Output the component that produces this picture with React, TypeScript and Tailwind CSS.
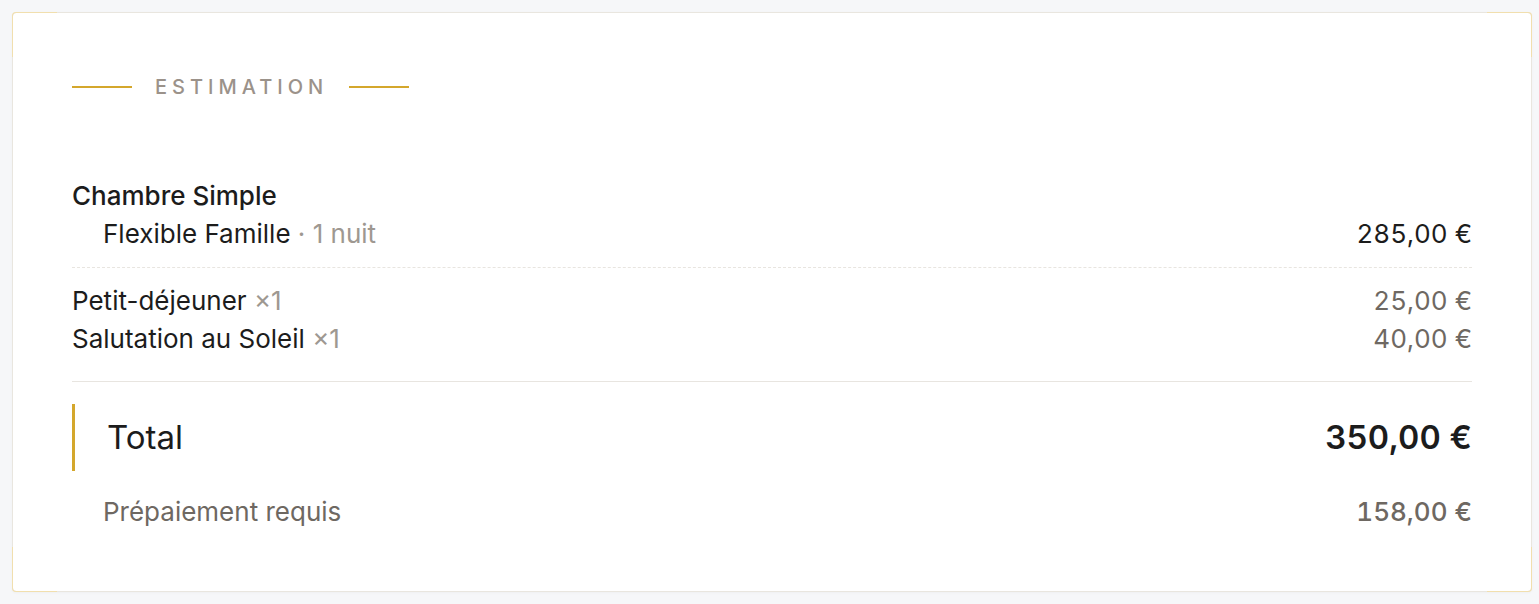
import React from "react";

const Corner = ({ pos }: { pos: string }) => (
  <div className={`pointer-events-none absolute ${pos} h-[45px] w-[45px] border-[#f1dfae]`} />
);

export default function App() {
  return (
    <div className="min-h-[604px] w-full bg-[#f6f7f9] pl-3 pt-3" style={{ fontFamily: "Inter, 'Noto Sans', sans-serif" }}>
      <div className="relative h-[580px] w-[1520px] rounded-[4px] border border-[#e9e6df] bg-white px-[59px] pt-[62px] shadow-[0_1px_3px_rgba(0,0,0,0.03)]">
        <Corner pos="-left-px -top-px border-l border-t rounded-tl-[4px]" />
        <Corner pos="-right-px -top-px border-r border-t rounded-tr-[4px]" />
        <Corner pos="-left-px -bottom-px border-l border-b rounded-bl-[4px]" />
        <Corner pos="-right-px -bottom-px border-r border-b rounded-br-[4px]" />

        <div className="flex h-[24px] items-center">
          <div className="h-[2px] w-[60px] bg-[#d4a72c]" />
          <div className="ml-[23px] mr-[21px] text-[20px] font-medium leading-[24px] tracking-[0.25em] text-[#9b928a]">ESTIMATION</div>
          <div className="h-[2px] w-[60px] bg-[#d4a72c]" />
        </div>

        <div className="mt-[78px] text-[26px] font-medium leading-[38px] text-[#1c1c1c]">Chambre Simple</div>
        <div className="flex items-center justify-between text-[26px] leading-[38px]">
          <div className="pl-[31px] text-[#1c1c1c]">
            Flexible Famille <span className="text-[#9e9891]">· 1 nuit</span>
          </div>
          <div className="tabular-nums text-[#1c1c1c]">285,00 €</div>
        </div>

        <div className="mt-[14px] border-t border-dashed border-[#e8e5e0]" />

        <div className="mt-[14px] flex items-center justify-between text-[26px] leading-[38px]">
          <div className="text-[#1c1c1c]">
            Petit-déjeuner <span className="text-[#9e9891]">×1</span>
          </div>
          <div className="tabular-nums text-[#6e6862]">25,00 €</div>
        </div>
        <div className="flex items-center justify-between text-[26px] leading-[38px]">
          <div className="text-[#1c1c1c]">
            Salutation au Soleil <span className="text-[#9e9891]">×1</span>
          </div>
          <div className="tabular-nums text-[#6e6862]">40,00 €</div>
        </div>

        <div className="mt-[23px] border-t border-[#e8e5e0]" />

        <div className="mt-[22px] flex h-[67px] items-center justify-between border-l-[3px] border-[#d4a72c] pl-[32px]">
          <div className="text-[33px] text-[#1c1c1c]">Total</div>
          <div className="text-[33px] font-semibold tabular-nums text-[#1c1c1c]">350,00 €</div>
        </div>

        <div className="mt-[22px] flex items-center justify-between text-[26px] leading-[38px]">
          <div className="pl-[31px] text-[#6e6862]">Prépaiement requis</div>
          <div className="font-medium tabular-nums text-[#6e6862]">158,00 €</div>
        </div>
      </div>
    </div>
  );
}
